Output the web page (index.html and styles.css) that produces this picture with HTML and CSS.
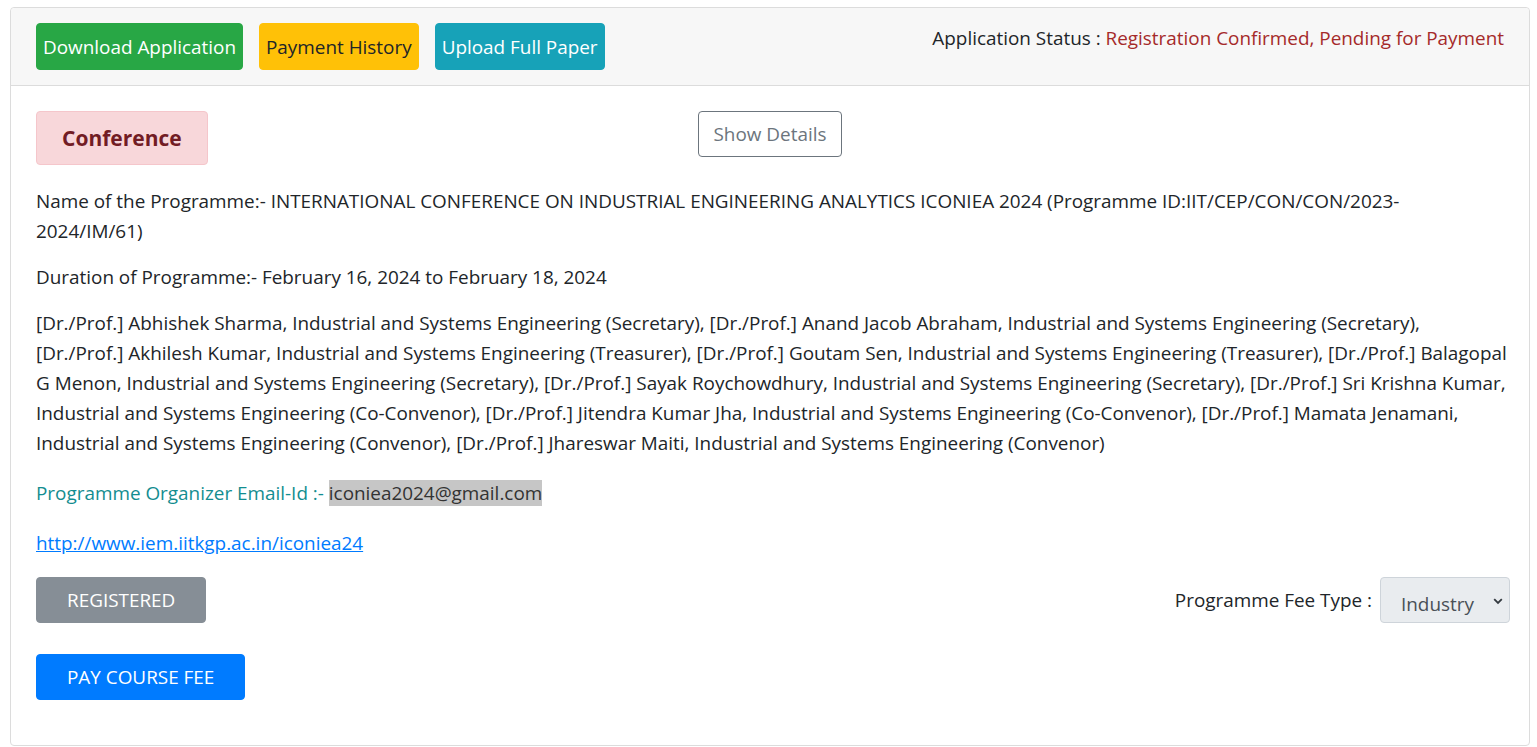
FILE: index.html
```html
<!DOCTYPE html>
<html lang="en">
<head>
<meta charset="utf-8">
<title>Application</title>
<link rel="stylesheet" href="styles.css">
</head>
<body>
<div class="card">
  <div class="card-header">
    <div class="actions">
      <button class="btn btn-success">Download Application</button>
      <button class="btn btn-warning">Payment History</button>
      <button class="btn btn-info">Upload Full Paper</button>
    </div>
    <div class="status">Application Status : <span class="status-value">Registration Confirmed, Pending for Payment</span></div>
  </div>
  <div class="card-body">
    <div class="top-row">
      <div class="badge-cell"><div class="alert">Conference</div></div>
      <button class="btn-outline">Show Details</button>
      <div></div>
    </div>
    <p class="para">Name of the Programme:- INTERNATIONAL CONFERENCE ON INDUSTRIAL ENGINEERING ANALYTICS ICONIEA 2024 (Programme ID:IIT/CEP/CON/CON/2023-2024/IM/61)</p>
    <p class="para">Duration of Programme:- February 16, 2024 to February 18, 2024</p>
    <p class="para people">[Dr./Prof.] Abhishek Sharma, Industrial and Systems Engineering (Secretary), [Dr./Prof.] Anand Jacob Abraham, Industrial and Systems Engineering (Secretary), [Dr./Prof.] Akhilesh Kumar, Industrial and Systems Engineering (Treasurer), [Dr./Prof.] Goutam Sen, Industrial and Systems Engineering (Treasurer), [Dr./Prof.] Balagopal G Menon, Industrial and Systems Engineering (Secretary), [Dr./Prof.] Sayak Roychowdhury, Industrial and Systems Engineering (Secretary), [Dr./Prof.] Sri Krishna Kumar, Industrial and Systems Engineering (Co-Convenor), [Dr./Prof.] Jitendra Kumar Jha, Industrial and Systems Engineering (Co-Convenor), [Dr./Prof.] Mamata Jenamani, Industrial and Systems Engineering (Convenor), [Dr./Prof.] Jhareswar Maiti, Industrial and Systems Engineering (Convenor)</p>
    <p class="email-line"><span class="email-label">Programme Organizer Email-Id :- </span><span class="email">iconiea2024@gmail.com</span></p>
    <p class="link-line"><a href="#" class="link">http://www.iem.iitkgp.ac.in/iconiea24</a></p>
    <div class="fee-row">
      <button class="btn btn-secondary">REGISTERED</button>
      <div class="fee-type">
        <label class="fee-label" for="fee">Programme Fee Type :</label>
        <div class="select-wrap">
          <select id="fee" class="select"><option>Industry</option></select>
          <svg class="chevron" width="10" height="7" viewBox="0 0 10 7"><path d="M1.2 1.2 L5 5 L8.8 1.2" fill="none" stroke="#343a40" stroke-width="1.8"/></svg>
        </div>
      </div>
    </div>
    <button class="btn btn-primary btn-pay">PAY COURSE FEE</button>
  </div>
</div>
</body>
</html>
```

FILE: styles.css
```css
* { box-sizing: border-box; }
html, body { margin: 0; padding: 0; background: #fff; }
body {
  font-family: "Open Sans", "Noto Sans", sans-serif;
  font-size: 18.9px;
  line-height: 30px;
  color: #212529;
}
.card {
  margin: 7px 7px 0 10px;
  border: 1px solid #dcdcdc;
  border-radius: 4px;
  height: 739px;
}
.card-header {
  background: #f7f7f7;
  border-bottom: 1px solid #dcdcdc;
  padding: 15px 25px 15px 25px;
  display: flex;
  justify-content: space-between;
  align-items: flex-start;
  border-radius: 4px 4px 0 0;
}
.actions { display: flex; gap: 16px; }
.btn {
  font-family: inherit;
  font-size: 18.9px;
  line-height: 30px;
  border: 1px solid transparent;
  border-radius: 4px;
  padding: 8px 6px 7px 6px;
  cursor: pointer;
  color: #fff;
}
.btn-success { background: #28a745; border-color: #28a745; }
.btn-warning { background: #ffc107; border-color: #ffc107; color: #212529; }
.btn-info { background: #17a2b8; border-color: #17a2b8; }
.btn-secondary { background: #868e96; border-color: #868e96; padding: 7px 30px; }
.btn-primary { background: #007bff; border-color: #007bff; padding: 7px 30px; }
.status-value { color: #a52a2a; }
.card-body { padding: 25px 25px 0 25px; }
.top-row {
  display: grid;
  grid-template-columns: 1fr auto 1fr;
  align-items: start;
  margin-bottom: 21px;
}
.alert {
  display: inline-block;
  background: #f8d7da;
  border: 1px solid #f5c6cb;
  color: #721c24;
  font-weight: 700;
  font-size: 21px;
  padding: 11px 25px;
  border-radius: 4px;
}
.btn-outline {
  font-family: inherit;
  font-size: 18.9px;
  line-height: 30px;
  background: #fff;
  color: #6c757d;
  border: 1px solid #6c757d;
  border-radius: 4px;
  padding: 7px 15px;
}
.para { margin: 0 0 16px 0; }
.people { margin-right: -5px; }
.email-line { margin: 20px 0 0 0; }
.email-label { color: #138d90; }
.email { background: #c6c6c6; color: #333; }
.link-line { margin: 20px 0 0 0; }
.link { color: #007bff; text-decoration: underline; }
.fee-row {
  margin-top: 19px;
  margin-right: -6px;
  display: flex;
  justify-content: space-between;
  align-items: center;
}
.fee-type { display: flex; align-items: center; gap: 8px; }
.select-wrap { position: relative; }
.select {
  appearance: none;
  -webkit-appearance: none;
  width: 130px;
  height: 46px;
  background: #e9ecef;
  border: 1px solid #ced4da;
  border-radius: 4px;
  font-family: inherit;
  font-size: 18.9px;
  color: #495057;
  padding: 8px 20px 0 20px;
}
.chevron {
  position: absolute;
  right: 7px;
  top: 21px;
  pointer-events: none;
}
.btn-pay { display: block; margin-top: 31px; }
```
